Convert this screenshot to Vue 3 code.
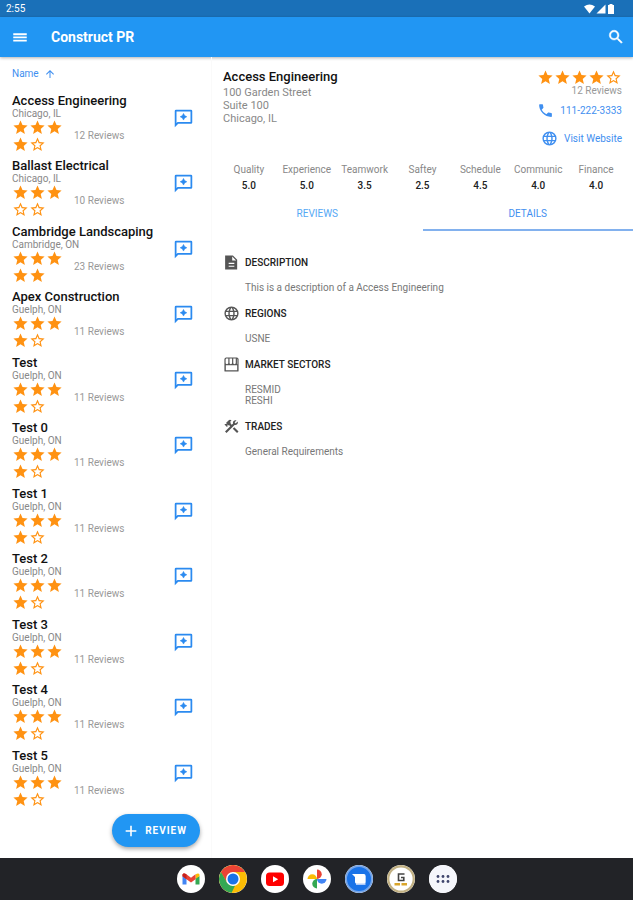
<script setup>
import { ref } from 'vue'

const STAR = 'M12 17.27 18.18 21l-1.64-7.03L22 9.24l-7.19-.61L12 2 9.19 8.63 2 9.24l5.46 4.73L5.82 21z'
const STAR_OUTLINE = 'm22 9.24-7.19-.62L12 2 9.19 8.63 2 9.24l5.46 4.73L5.82 21 12 17.27 18.18 21l-1.63-7.03zM12 15.4l-3.76 2.27 1-4.28-3.32-2.88 4.38-.38L12 6.1l1.71 4.04 4.38.38-3.32 2.88 1 4.28z'
const GLOBE = 'M12 2a10 10 0 1 0 0 20 10 10 0 0 0 0-20zm6.93 6h-2.95a15.7 15.7 0 0 0-1.38-3.56A8.03 8.03 0 0 1 18.92 8zM12 4.04c.83 1.2 1.48 2.53 1.91 3.96h-3.82c.43-1.43 1.08-2.76 1.91-3.96zM4.26 14a8.2 8.2 0 0 1 0-4h3.38a16.5 16.5 0 0 0 0 4zm.82 2h2.95c.32 1.25.78 2.45 1.38 3.56A7.99 7.99 0 0 1 5.08 16zm2.95-8H5.08a7.99 7.99 0 0 1 4.33-3.56A15.7 15.7 0 0 0 8.03 8zM12 19.96A14 14 0 0 1 10.09 16h3.82A14 14 0 0 1 12 19.96zM14.34 14H9.66a14.7 14.7 0 0 1 0-4h4.68a14.7 14.7 0 0 1 0 4zm.25 5.56c.6-1.11 1.06-2.31 1.38-3.56h2.95a8.03 8.03 0 0 1-4.33 3.56zM16.36 14a16.5 16.5 0 0 0 0-4h3.38a8.2 8.2 0 0 1 0 4z'
const DOC = 'M5 2h9l6 6v14H3V2zm8 1.500V9h5.500zM8 12.500V14h8v-1.500zm0 4V18h8v-1.500z'
const STORE = 'M4 2h16l2 2v17a1 1 0 0 1-1 1H3a1 1 0 0 1-1-1V4zm.5 1.700L3.700 5v5c0 1 .8 1.700 1.900 1.700S7.500 11 7.500 10V3.700zm4.700 0V10c0 1 .8 1.700 1.900 1.700.9 0 1.700-.7 1.700-1.700V3.700zm5.300 0V10c0 1 .7 1.700 1.700 1.700s1.800-.7 1.800-1.700V3.700zm5.200 0V11.500h.6V5zM4 13.200v7h16v-7z'
const TOOLS = 'm13.780 15.170 2.120-2.120 6 6-2.120 2.120zM17.500 10c1.930 0 3.500-1.570 3.500-3.500 0-.58-.16-1.120-.41-1.600l-2.700 2.700-1.490-1.490 2.700-2.700c-.48-.25-1.020-.41-1.600-.41C15.570 3 14 4.570 14 6.500c0 .41.08.8.21 1.160l-1.850 1.850-1.780-1.780.71-.71-1.410-1.410L12 3.490a3 3 0 0 0-4.240 0L4.220 7.030l1.410 1.410H2.810l-.71.710 3.540 3.540.71-.71V9.150l1.410 1.410.71-.71 1.780 1.780-7.410 7.410 2.120 2.120L16.340 9.790c.36.130.75.210 1.160.210z'

const companies = [
  { name: 'Access Engineering', place: 'Chicago, IL', stars: 4, reviews: 12 },
  { name: 'Ballast Electrical', place: 'Chicago, IL', stars: 3, reviews: 10 },
  { name: 'Cambridge Landscaping', place: 'Cambridge, ON', stars: 5, reviews: 23 },
  { name: 'Apex Construction', place: 'Guelph, ON', stars: 4, reviews: 11 },
  ...['Test', 'Test 0', 'Test 1', 'Test 2', 'Test 3', 'Test 4', 'Test 5'].map((name) => ({
    name, place: 'Guelph, ON', stars: 4, reviews: 11,
  })),
]

const ratings = [
  ['Quality', '5.0'], ['Experience', '5.0'], ['Teamwork', '3.5'], ['Saftey', '2.5'],
  ['Schedule', '4.5'], ['Communic', '4.0'], ['Finance', '4.0'],
]

const sections = [
  { title: 'Description', icon: DOC, lines: ['This is a description of a Access Engineering'] },
  { title: 'Regions', icon: GLOBE, lines: ['USNE'] },
  { title: 'Market Sectors', icon: STORE, lines: ['RESMID', 'RESHI'] },
  { title: 'Trades', icon: TOOLS, lines: ['General Requirements'] },
]

const tab = ref('details')
</script>

<template>
  <div class="page">
    <div class="status">
      <span>2:55</span>
      <div class="status-icons">
        <svg width="11" height="10" viewBox="0 0 11 10"><path d="M0 2.500Q5.500-1.500 11 2.500L5.500 9.500z" /></svg>
        <svg width="10" height="10" viewBox="0 0 10 10"><path d="M9.500.5v9H.5z" /></svg>
        <svg width="8" height="10" viewBox="0 0 8 10"><path d="M2.500 0h3v1H7v9H1V1h1.500z" /></svg>
      </div>
    </div>
    <header class="appbar">
      <button class="icon-btn" aria-label="Menu">
        <svg width="18" height="18" viewBox="0 0 24 24"><path d="M3 18h18v-2.500H3zm0-4.200h18v-2.500H3zm0-4.300h18V7H3z" /></svg>
      </button>
      <h1>Construct PR</h1>
      <button class="icon-btn" aria-label="Search">
        <svg width="18" height="18" viewBox="0 0 24 24" stroke="currentColor" stroke-width=".6"><path d="M15.500 14h-.79l-.28-.27A6.470 6.470 0 0 0 16 9.500 6.500 6.500 0 1 0 9.500 16c1.610 0 3.090-.59 4.230-1.570l.27.28v.79l5 4.990L20.490 19zm-6 0C7.010 14 5 11.990 5 9.500S7.010 5 9.500 5 14 7.010 14 9.500 11.990 14 9.500 14z" /></svg>
      </button>
    </header>

    <div class="body">
      <aside class="sidebar">
        <button class="sort">
          Name
          <svg width="12" height="12" viewBox="0 0 24 24"><path d="m4 12 1.410 1.410L11 7.830V20h2V7.830l5.580 5.590L20 12l-8-8z" /></svg>
        </button>
        <ul class="list">
          <li v-for="c in companies" :key="c.name" class="company">
            <div class="info">
              <h2 class="name">{{ c.name }}</h2>
              <p class="place">{{ c.place }}</p>
              <div class="score">
                <div class="stars wrap">
                  <svg v-for="n in 5" :key="n" width="17" height="17" viewBox="0 0 24 24"><path :d="n <= c.stars ? STAR : STAR_OUTLINE" /></svg>
                </div>
                <span class="count">{{ c.reviews }} Reviews</span>
              </div>
            </div>
            <button class="comment" :aria-label="`Review ${c.name}`">
              <svg width="21" height="21" viewBox="0 0 24 24"><path d="M20.500 2h-17A1.500 1.500 0 0 0 2 3.500V22l4-4h14.500a1.500 1.500 0 0 0 1.500-1.500v-13A1.500 1.500 0 0 0 20.500 2zM20 16H5.200L4 17.200V4h16z" /><path d="M12 6.200 13.300 8.700 15.800 10l-2.500 1.300L12 13.800l-1.300-2.500L8.200 10l2.500-1.300z" stroke="currentColor" stroke-width=".6" /></svg>
            </button>
          </li>
        </ul>
        <div class="actions">
          <button class="fab">
            <svg width="16" height="16" viewBox="0 0 24 24"><path d="M20 13.200h-6.800V20h-2.400v-6.800H4v-2.400h6.800V4h2.400v6.800H20z" /></svg>
            REVIEW
          </button>
        </div>
      </aside>

      <main class="detail">
        <section class="summary">
          <div>
            <h2 class="name">Access Engineering</h2>
            <address>100 Garden Street<br>Suite 100<br>Chicago, IL</address>
          </div>
          <div class="contact">
            <div class="stars">
              <svg v-for="n in 5" :key="n" width="17" height="17" viewBox="0 0 24 24"><path :d="n <= 4 ? STAR : STAR_OUTLINE" /></svg>
            </div>
            <span class="count">12 Reviews</span>
            <a class="link" href="tel:111-222-3333">
              <svg width="17" height="17" viewBox="0 0 24 24"><path d="M6.620 10.790a15.150 15.150 0 0 0 6.590 6.590l2.200-2.200c.27-.27.67-.36 1.020-.24 1.120.37 2.330.57 3.570.57.55 0 1 .45 1 1V20c0 .55-.45 1-1 1A17 17 0 0 1 3 4c0-.55.45-1 1-1h3.500c.55 0 1 .45 1 1 0 1.250.2 2.450.57 3.570.11.35.03.74-.25 1.020z" /></svg>
              111-222-3333
            </a>
            <a class="link" href="#website">
              <svg width="17" height="17" viewBox="0 0 24 24"><path :d="GLOBE" /></svg>
              Visit Website
            </a>
          </div>
        </section>

        <dl class="ratings">
          <div v-for="[label, value] in ratings" :key="label">
            <dt>{{ label }}</dt>
            <dd>{{ value }}</dd>
          </div>
        </dl>

        <div class="tabs" role="tablist">
          <button role="tab" :aria-selected="tab === 'reviews'" :class="{ active: tab === 'reviews' }" @click="tab = 'reviews'">REVIEWS</button>
          <button role="tab" :aria-selected="tab === 'details'" :class="{ active: tab === 'details' }" @click="tab = 'details'">DETAILS</button>
        </div>

        <div v-if="tab === 'details'" class="sections">
          <section v-for="s in sections" :key="s.title">
            <h3>
              <svg width="17" height="17" viewBox="0 0 24 24"><path fill-rule="evenodd" :d="s.icon" /></svg>
              {{ s.title }}
            </h3>
            <p v-for="line in s.lines" :key="line">{{ line }}</p>
          </section>
        </div>
      </main>
    </div>

    <nav class="dock">
      <button class="app" aria-label="Mail">
        <svg viewBox="0 0 28 28"><path fill="#4285f4" d="M5.500 11v8.500h4V13z" /><path fill="#34a853" d="M18.500 13v6.500h4V11z" /><path fill="#fbbc04" d="M18.500 9.500V14l4-3V9.500q-1-2-4 0z" /><path fill="#ea4335" d="M5.500 9.500Q6.500 7.500 9 9l5 3.700 4.500-3.400v4.900L14 17.600l-4.500-3.400-4-3z" /><path fill="#c5221f" d="M5.500 9.500Q6.500 7.500 9.500 9.400v4.800l-4-3z" /></svg>
      </button>
      <button class="app" aria-label="Browser">
        <svg viewBox="0 0 28 28"><circle cx="14" cy="14" r="14" fill="#fbbc04" /><path fill="#ea4335" d="M1.900 7A14 14 0 0 1 26.100 7H14L8 17.500z" /><path fill="#34a853" d="M1.900 7 8 17.500 14 21l2-.3L12.500 28A14 14 0 0 1 1.900 7z" /><circle cx="14" cy="14" r="7" fill="#fff" /><circle cx="14" cy="14" r="5.500" fill="#1a73e8" /></svg>
      </button>
      <button class="app" aria-label="Video">
        <svg viewBox="0 0 28 28"><rect x="5" y="7.500" width="18" height="13.500" rx="3.500" fill="#f00" /><path fill="#fff" d="M12 11.200v6l5.200-3z" /></svg>
      </button>
      <button class="app" aria-label="Photos">
        <svg viewBox="0 0 28 28"><path fill="#ea4335" d="M14 4.500A4.750 4.750 0 0 1 14 14z" /><path fill="#4285f4" d="M23.500 14A4.750 4.750 0 0 1 14 14z" /><path fill="#34a853" d="M14 23.500A4.750 4.750 0 0 1 14 14z" /><path fill="#fbbc04" d="M4.500 14A4.750 4.750 0 0 1 14 14z" /></svg>
      </button>
      <button class="app" aria-label="Messages">
        <svg viewBox="0 0 28 28"><circle cx="14" cy="14" r="13" fill="#1a73e8" stroke="#76a5e8" stroke-width="2" /><path fill="#aecbfa" d="M11 11h9.500v9H11z" /><path fill="#fff" d="M7 9h12a1.500 1.500 0 0 1 1.500 1.500V17a1.500 1.500 0 0 1-1.500 1.500h-7.500A1.500 1.500 0 0 1 10 17v-5z" /></svg>
      </button>
      <button class="app" aria-label="Gold">
        <svg viewBox="0 0 28 28"><circle cx="14" cy="14" r="12.800" fill="#fff" stroke="#c2b184" stroke-width="2.400" /><path fill="none" stroke="#444" stroke-width="1.600" d="M17.500 9h-6v6.500h5.300v-3H14" /><path fill="#d9a52c" d="M7.500 18h5.500v2.500H7.500zm7 0H20v2.500h-5.500z" /></svg>
      </button>
      <button class="app" aria-label="All apps">
        <svg viewBox="0 0 28 28"><circle cx="14" cy="14" r="14" fill="#f5f6fb" /><g fill="#3f456c"><circle cx="9" cy="11.500" r="1.400" /><circle cx="14" cy="11.500" r="1.400" /><circle cx="19" cy="11.500" r="1.400" /><circle cx="9" cy="16.500" r="1.400" /><circle cx="14" cy="16.500" r="1.400" /><circle cx="19" cy="16.500" r="1.400" /></g></svg>
      </button>
    </nav>
  </div>
</template>

<style>
body { margin: 0; background: #fff; }
</style>

<style scoped>
.page {
  min-height: 100vh;
  display: flex;
  flex-direction: column;
  font-family: Roboto, "Liberation Sans", sans-serif;
  font-size: 10px;
  color: #212121;
}
h1, h2, h3, p, ul, dl, dd { margin: 0; padding: 0; }
svg { display: block; flex: none; fill: currentColor; }
button { font: inherit; color: inherit; background: none; border: 0; padding: 0; cursor: pointer; }

.status {
  height: 17px;
  padding: 0 18px 0 6px;
  display: flex;
  align-items: center;
  justify-content: space-between;
  background: #1a70b8;
  color: #fff;
}
.status-icons { display: flex; gap: 1px; }
.appbar {
  height: 40px;
  padding: 0 8px 0 11px;
  display: flex;
  align-items: center;
  background: #2196f3;
  color: #fff;
  box-shadow: 0 1px 3px rgba(0, 0, 0, 0.3);
}
.appbar h1 { flex: 1; margin-left: 22px; font-size: 14px; font-weight: 700; }

.body { flex: 1; display: grid; grid-template-columns: 1fr 2fr; }
.sidebar { display: flex; flex-direction: column; min-width: 0; }
.sort {
  height: 33px;
  padding: 0 12px;
  display: flex;
  align-items: center;
  gap: 5px;
  color: #3f8ff0;
}
.list { flex: 1; display: grid; grid-auto-rows: 1fr; list-style: none; }
.company {
  padding: 3px 17px 0 12px;
  display: flex;
  align-items: flex-start;
  justify-content: space-between;
}
.name { font-size: 13px; line-height: 16px; font-weight: 500; color: #111; white-space: nowrap; }
.place { line-height: 10px; color: #888; }
.score { display: flex; align-items: center; gap: 11px; }
.stars { display: flex; color: #ff9212; }
.wrap { width: 51px; flex-wrap: wrap; }
.count { color: #999; line-height: 10px; }
.comment { margin-top: 15px; color: #2b8af0; }
.actions { height: 48px; padding: 4px 11px 0; box-sizing: border-box; display: flex; justify-content: flex-end; align-items: flex-start; }
.fab {
  height: 33px;
  padding: 0 13px 0 11px;
  display: flex;
  align-items: center;
  gap: 6px;
  border-radius: 17px;
  background: #2196f3;
  color: #fff;
  font-weight: 700;
  letter-spacing: 1px;
  box-shadow: 0 2px 4px rgba(0, 0, 0, 0.35);
}

.detail { min-width: 0; border-left: 1px solid #fafafa; box-sizing: border-box; }
.summary { padding: 12px 11px 0; display: flex; justify-content: space-between; }
address { margin-top: 1px; font-style: normal; font-size: 11px; line-height: 13px; color: #888; }
.contact { display: flex; flex-direction: column; align-items: flex-end; }
.link { display: flex; align-items: center; gap: 6px; height: 28px; color: #3f8ff0; text-decoration: none; }
.ratings { padding: 10px 8px 0; display: grid; grid-template-columns: repeat(7, 1fr); text-align: center; }
.ratings dt { line-height: 16px; color: #888; }
.ratings dd { line-height: 16px; font-weight: 500; }
.tabs { margin-top: 3px; display: grid; grid-template-columns: 1fr 1fr; }
.tabs button { height: 34px; border-bottom: 2px solid transparent; color: #55a8f5; }
.tabs button.active { color: #3f8ff0; border-color: #82b1ee; }
.sections { padding: 23px 11px; display: flex; flex-direction: column; gap: 12px; }
.sections h3 {
  height: 16px;
  margin-bottom: 12px;
  display: flex;
  align-items: center;
  gap: 5px;
  font-size: 10px;
  font-weight: 500;
  text-transform: uppercase;
}
.sections h3 svg { color: #555; }
.sections p { padding-left: 22px; line-height: 11px; color: #777; }

.dock { height: 42px; display: flex; align-items: center; justify-content: center; gap: 14px; background: #222327; }
.app { width: 28px; height: 28px; border-radius: 50%; background: #fff; overflow: hidden; }
</style>
